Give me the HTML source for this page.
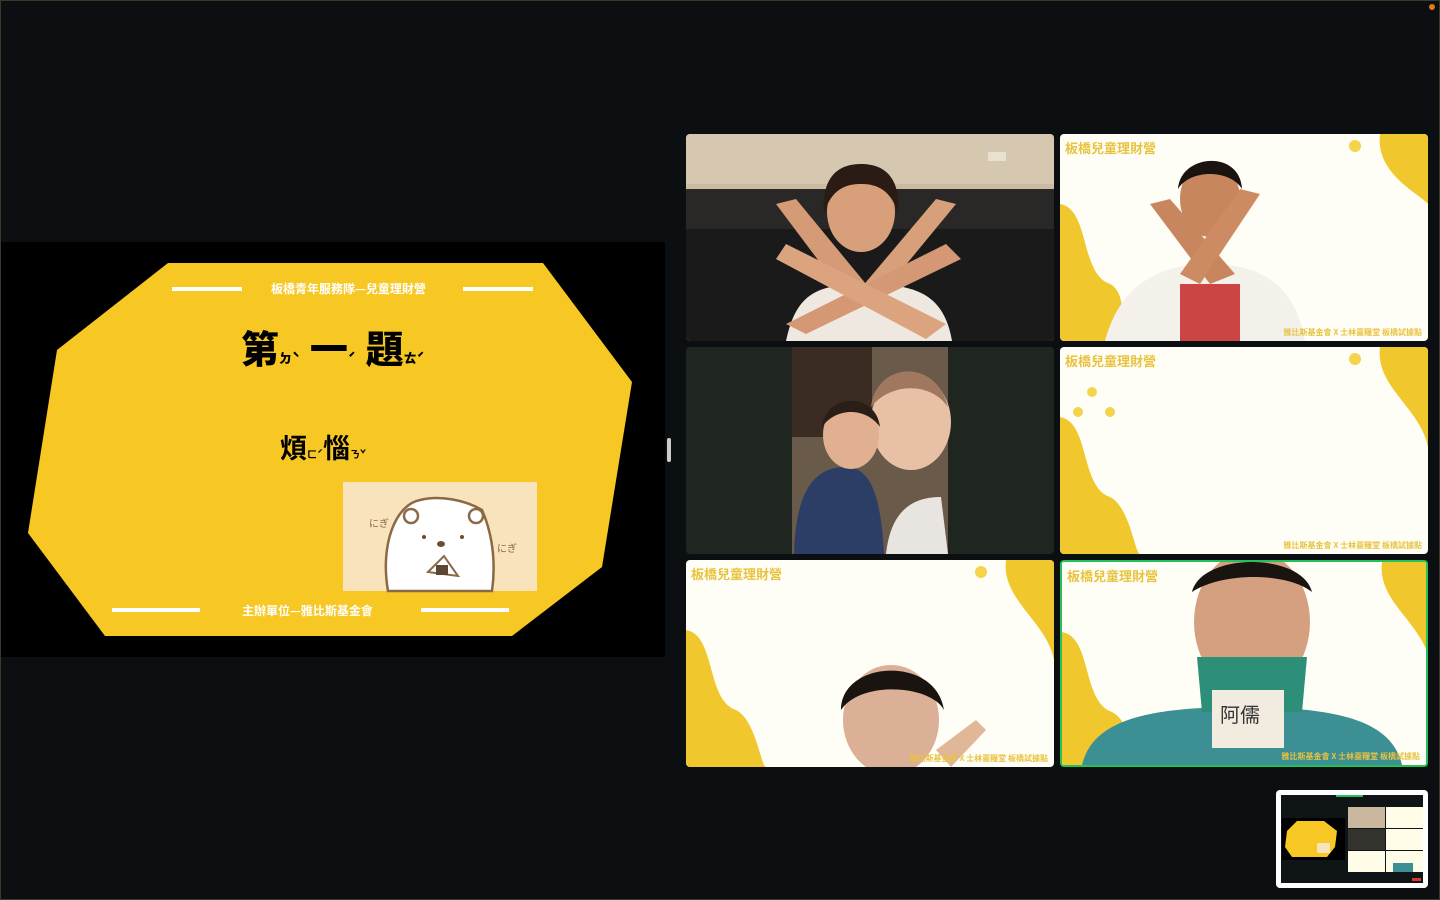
<!DOCTYPE html>
<html><head><meta charset="utf-8"><style>
html,body{margin:0;padding:0;width:1440px;height:900px;background:#0b0f12;overflow:hidden;font-family:"Liberation Sans","Noto Sans CJK TC",sans-serif}
.abs{position:absolute}
.tile{position:absolute;width:368px;height:207px;border-radius:4px;overflow:hidden;background:#fffef6}
.frame .t{position:absolute;left:5px;top:4px;color:#e8c340;font-size:13px;font-weight:bold;font-family:"Noto Sans CJK TC",sans-serif}
.frame .b{position:absolute;right:6px;bottom:3px;color:#e8c340;font-size:8px;font-weight:bold;font-family:"Noto Sans CJK TC",sans-serif}
</style></head><body>
<div class="abs" style="left:0;top:0;width:1440px;height:900px;border:1px solid #3a3a2a;box-sizing:border-box"></div>
<div class="abs" style="left:1429px;top:4px;width:6px;height:6px;border-radius:3px;background:#e07a1a"></div>

<!-- slide -->
<div class="abs" style="left:1px;top:242px;width:664px;height:415px;background:#000"></div>
<svg class="abs" style="left:0;top:0" width="670" height="660">
<polygon points="168,263 543,263 632,382 602,567 512,636 105,636 28,533 57,350" fill="#f7c724"/>
<rect x="172" y="287" width="70" height="4" fill="#fff"/><rect x="463" y="287" width="70" height="4" fill="#fff"/>
<rect x="112" y="608" width="88" height="4" fill="#fff"/><rect x="421" y="608" width="88" height="4" fill="#fff"/>
<rect x="343" y="482" width="194" height="109" fill="#f9e3bd"/>
<path d="M388,591 C380,545 395,505 420,500 C440,495 465,500 482,510 C495,540 495,570 492,591Z" fill="#fff" stroke="#8a6a45" stroke-width="2.5"/>
<circle cx="411" cy="516" r="7" fill="#fff" stroke="#8a6a45" stroke-width="2.5"/><circle cx="476" cy="516" r="7" fill="#fff" stroke="#8a6a45" stroke-width="2.5"/>
<circle cx="424" cy="537" r="2" fill="#6b4e30"/><circle cx="462" cy="537" r="2" fill="#6b4e30"/><ellipse cx="441" cy="544" rx="4" ry="3" fill="#6b4e30"/>
<path d="M428,572 L444,556 L458,576Z" fill="#fff" stroke="#8a6a45" stroke-width="2"/><rect x="436" y="565" width="12" height="10" fill="#5c4631"/>
<text x="369" y="527" font-size="10" fill="#8a6a45" font-family="Noto Sans CJK JP">にぎ</text>
<text x="497" y="552" font-size="10" fill="#8a6a45" font-family="Noto Sans CJK JP">にぎ</text>
</svg>
<div class="abs" style="left:271px;top:280px;color:#fff;font-size:12px;font-weight:bold;font-family:'Noto Sans CJK TC',sans-serif">板橋青年服務隊—兒童理財營</div>
<div class="abs" style="left:242px;top:602px;color:#fff;font-size:12px;font-weight:bold;font-family:'Noto Sans CJK TC',sans-serif">主辦單位—雅比斯基金會</div>
<div class="abs" style="left:241px;top:322px;color:#000;font-size:38px;font-weight:900;line-height:50px;font-family:'Noto Sans CJK TC',sans-serif">第<span style="font-size:13px;margin-right:10px">ㄉˋ</span>一<span style="font-size:13px;margin-right:10px">ˊ</span>題<span style="font-size:13px">ㄊˊ</span></div>
<div class="abs" style="left:280px;top:428px;color:#000;font-size:27px;font-weight:700;line-height:38px;font-family:'Noto Sans CJK TC',sans-serif">煩<span style="font-size:10px">ㄈˊ</span>惱<span style="font-size:10px">ㄋˇ</span></div>
<div class="abs" style="left:667px;top:438px;width:4px;height:24px;border-radius:2px;background:#ccc"></div>

<!-- tile 1 -->
<div class="tile" style="left:686px;top:134px;background:#cbbba3">
<svg width="368" height="207"><rect width="368" height="50" fill="#d6c8b0"/><rect x="0" y="55" width="368" height="152" fill="#1b1a1a"/><rect x="0" y="55" width="368" height="40" fill="#2a2826"/>
<rect x="302" y="18" width="18" height="9" fill="#e8e0d0"/>
<path d="M100,207 C110,160 130,150 180,150 C230,150 258,160 266,207Z" fill="#efe8e0"/>
<ellipse cx="175" cy="78" rx="34" ry="40" fill="#d8a07a"/><path d="M138,80 C135,40 155,30 175,30 C200,30 215,45 212,80 C205,55 190,50 175,50 C160,50 145,55 138,80Z" fill="#2a1c14"/>
<path d="M90,70 L150,150 L180,150 L110,65Z" fill="#d59a76"/><path d="M270,70 L200,155 L170,160 L250,65Z" fill="#d8a07a"/>
<path d="M100,190 L260,110 L275,125 L120,200Z" fill="#d49874"/><path d="M260,190 L100,110 L90,125 L240,205Z" fill="#dba47e"/></svg></div>

<div class="tile frame" style="left:1060px;top:134px">
<svg width="368" height="207"><path d="M0,70 C30,75 20,140 50,150 C70,160 60,207 60,207 L0,207Z" fill="#f0c72c"/><path d="M320,0 C315,40 360,60 368,70 L368,0Z" fill="#f0c72c"/><circle cx="295" cy="12" r="6" fill="#f4d44a"/>
<path d="M45,207 C60,150 100,130 150,130 C200,130 235,150 245,207Z" fill="#f4f0ea"/><rect x="120" y="150" width="60" height="57" fill="#c44"/><ellipse cx="150" cy="65" rx="30" ry="38" fill="#c8865e"/><path d="M118,55 C120,20 180,15 182,55 C170,35 130,35 118,55Z" fill="#1a1411"/>
<path d="M90,70 L150,150 L175,140 L110,65Z" fill="#c8865e"/><path d="M200,60 L140,150 L120,140 L180,55Z" fill="#cc8b62"/></svg>
<div class="t">板橋兒童理財營</div><div class="b">雅比斯基金會 X 士林靈糧堂 板橋試據點</div></div>

<div class="tile" style="left:686px;top:347px;background:#1f2620">
<svg width="368" height="207"><rect x="106" y="0" width="156" height="207" fill="#6a5a4a"/><rect x="106" y="0" width="80" height="90" fill="#3a2c22"/>
<ellipse cx="225" cy="75" rx="40" ry="48" fill="#e8c0a5"/><path d="M185,60 C190,15 250,10 262,60 C245,35 205,35 185,60Z" fill="#a07860"/>
<path d="M108,207 C110,140 130,120 160,120 C185,120 195,150 198,207Z" fill="#2c3e66"/><ellipse cx="165" cy="88" rx="28" ry="34" fill="#e0b090"/><path d="M136,80 C140,45 190,45 194,80 C180,60 150,60 136,80Z" fill="#2a1e18"/>
<path d="M200,207 C205,160 230,150 255,150 L262,207Z" fill="#e8e4e0"/></svg></div>

<div class="tile frame" style="left:1060px;top:347px">
<svg width="368" height="207"><path d="M0,70 C30,75 20,140 50,150 C70,160 75,207 80,207 L0,207Z" fill="#f0c72c"/><path d="M320,0 C315,40 360,60 368,100 L368,0Z" fill="#f0c72c"/><circle cx="295" cy="12" r="6" fill="#f4d44a"/><circle cx="32" cy="45" r="5" fill="#f4d44a"/><circle cx="18" cy="65" r="5" fill="#f4d44a"/><circle cx="50" cy="65" r="5" fill="#f4d44a"/></svg>
<div class="t">板橋兒童理財營</div><div class="b">雅比斯基金會 X 士林靈糧堂 板橋試據點</div></div>

<div class="tile frame" style="left:686px;top:560px">
<svg width="368" height="207"><path d="M0,70 C30,75 20,140 50,150 C70,160 75,207 80,207 L0,207Z" fill="#f0c72c"/><path d="M320,0 C315,40 360,60 368,100 L368,0Z" fill="#f0c72c"/><circle cx="295" cy="12" r="6" fill="#f4d44a"/>
<ellipse cx="205" cy="160" rx="48" ry="55" fill="#dcb096"/><path d="M155,150 C155,100 250,95 258,150 C245,125 175,120 155,150Z" fill="#1a1411"/><path d="M250,190 L290,160 L300,170 L265,207Z" fill="#e0b898"/></svg>
<div class="t">板橋兒童理財營</div><div class="b">雅比斯基金會 X 士林靈糧堂 板橋試據點</div></div>

<div class="tile frame" style="left:1060px;top:560px;border:2px solid #22c15a;box-sizing:border-box">
<svg width="364" height="203"><path d="M0,70 C30,75 20,140 50,150 C70,160 75,207 80,207 L0,207Z" fill="#f0c72c"/><path d="M320,0 C315,40 360,60 368,100 L368,0Z" fill="#f0c72c"/>
<path d="M20,203 C30,160 80,145 180,145 C280,145 330,160 340,203Z" fill="#3c8f92"/><ellipse cx="190" cy="60" rx="58" ry="72" fill="#d4a080"/><path d="M130,30 C140,-10 240,-10 250,30 C225,10 160,10 130,30Z" fill="#1a1411"/>
<path d="M135,95 L245,95 L240,150 L140,150Z" fill="#2d8f78"/><rect x="150" y="128" width="72" height="58" fill="#f2ece0"/><text x="158" y="160" font-size="20" fill="#333" font-family="Noto Sans CJK TC">阿儒</text></svg>
<div class="t">板橋兒童理財營</div><div class="b">雅比斯基金會 X 士林靈糧堂 板橋試據點</div></div>

<!-- self preview -->
<div class="abs" style="left:1276px;top:790px;width:152px;height:98px;border-radius:4px;background:#fff"></div>
<div class="abs" style="left:1281px;top:795px;width:142px;height:88px;background:#0f1416"></div>
<svg class="abs" style="left:1281px;top:795px" width="142" height="88">
<rect x="1" y="23" width="63" height="42" fill="#000"/>
<polygon points="16,26 43,26 56,36 54,52 46,62 11,62 4,52 6,36" fill="#f7c724"/>
<rect x="36" y="48" width="13" height="10" fill="#f9e3bd"/>
<rect x="67" y="12" width="37" height="21" fill="#c9b7a0"/><rect x="105" y="12" width="37" height="21" fill="#fffde8"/>
<rect x="67" y="34" width="37" height="21" fill="#33332e"/><rect x="105" y="34" width="37" height="21" fill="#fffde8"/>
<rect x="67" y="56" width="37" height="21" fill="#fffde8"/><rect x="105" y="56" width="37" height="21" fill="#fffde8"/>
<rect x="112" y="68" width="20" height="9" fill="#3c8f92"/><rect x="55" y="0" width="27" height="2" fill="#22c15a"/>
<rect x="131" y="83" width="9" height="3" fill="#d33"/></svg>
</body></html>
